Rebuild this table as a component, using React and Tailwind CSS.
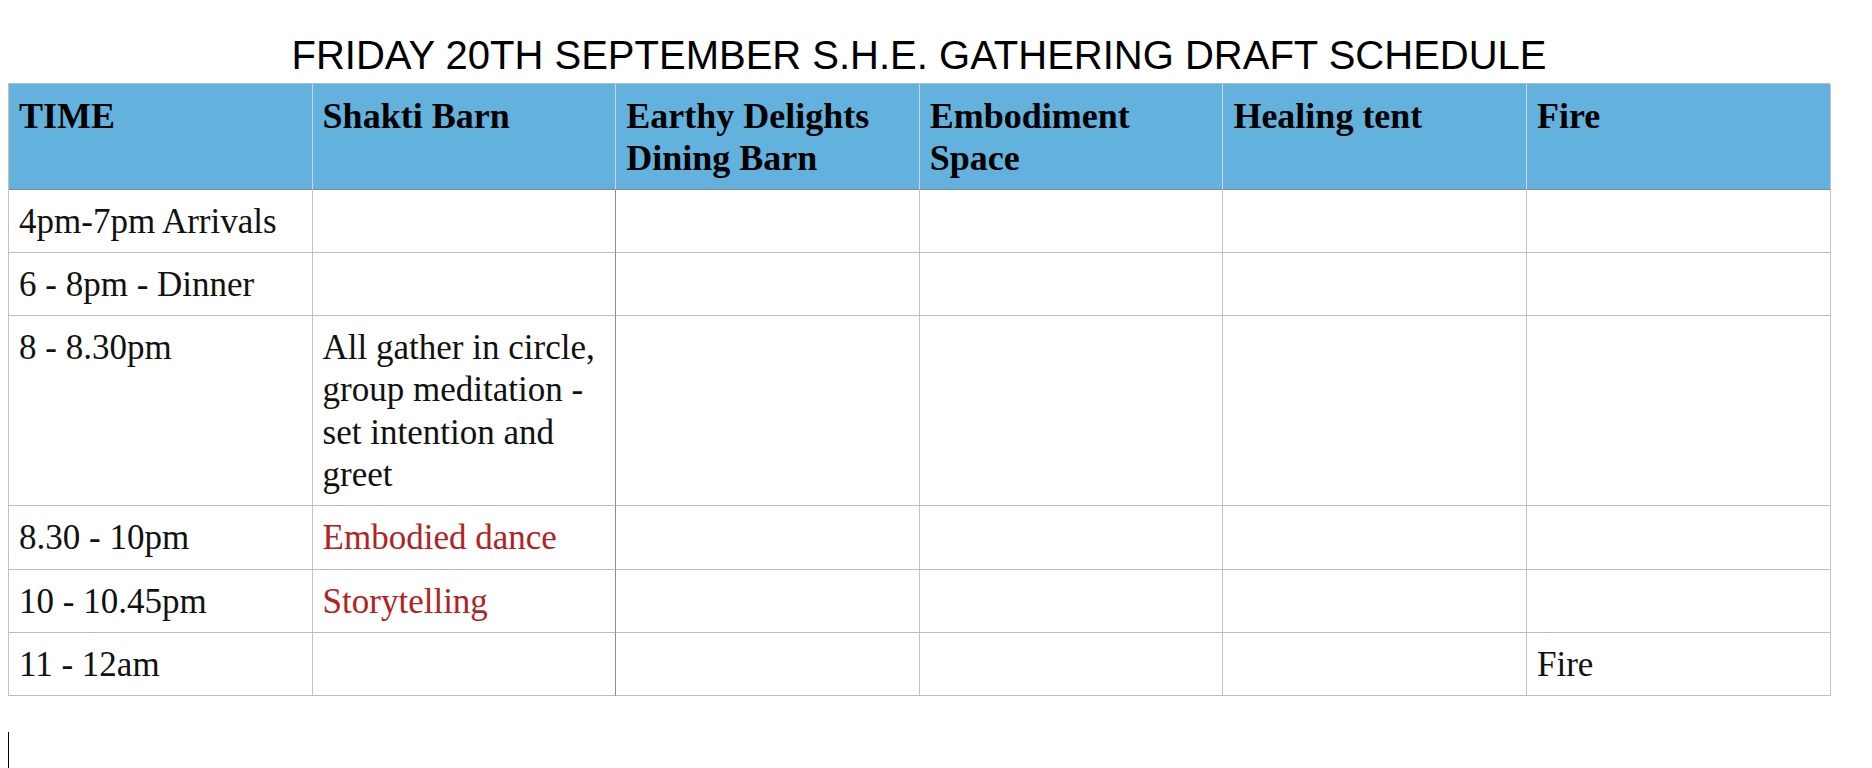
import React from "react";

const headers = ["TIME", "Shakti Barn", "Earthy Delights Dining Barn", "Embodiment Space", "Healing tent", "Fire"];

const rows = [
  [{ t: "4pm-7pm Arrivals" }, {}, {}, {}, {}, {}],
  [{ t: "6 - 8pm - Dinner" }, {}, {}, {}, {}, {}],
  [{ t: "8 - 8.30pm" }, { t: "All gather in circle, group meditation - set intention and greet" }, {}, {}, {}, {}],
  [{ t: "8.30 - 10pm" }, { t: "Embodied dance", red: true }, {}, {}, {}, {}],
  [{ t: "10 - 10.45pm" }, { t: "Storytelling", red: true }, {}, {}, {}, {}],
  [{ t: "11 - 12am" }, {}, {}, {}, {}, { t: "Fire" }],
];

const App = () => {
  return (
    <div className="min-h-[768px] bg-white px-[8px] pt-[33px]">
      <div className="w-[1822px]">
        <h1 className="mb-[6px] text-center font-['Liberation_Sans',Arial,sans-serif] text-[40px] leading-[44px] font-normal text-black">
          FRIDAY 20TH SEPTEMBER S.H.E. GATHERING DRAFT SCHEDULE
        </h1>
        <div className="grid grid-cols-[repeat(6,303.6px)] border-l border-t border-l-[#c0c0c0] border-t-[#bbbbbb] font-['Liberation_Serif','Times_New_Roman',serif]">
          {headers.map((h, i) => (
            <div
              key={h}
              className={`bg-[#62b2dd] px-[10px] pt-[11px] pb-[9px] text-[36px] leading-[42.3px] font-bold text-black border-b border-b-[#888888] border-r ${i === 5 ? "border-r-[#c4c4c4]" : "border-r-[#c5d8e4]"}`}
            >
              {h}
            </div>
          ))}
          {rows.map((row, r) =>
            row.map((c, i) => (
              <div
                key={`${r}-${i}`}
                className={`px-[10px] pt-[11px] pb-[9px] text-[35px] leading-[42.3px] border-b border-b-[#bdbdbd] border-r ${i === 1 ? "border-r-[#8c8c8c]" : "border-r-[#c4c4c4]"} ${c.red ? "text-[#b3221e]" : "text-[#111111]"}`}
              >
                {c.t || ""}
              </div>
            ))
          )}
        </div>
        <div className="mt-[36px] h-[36px] w-px bg-black" />
      </div>
    </div>
  );
};

export default App;
